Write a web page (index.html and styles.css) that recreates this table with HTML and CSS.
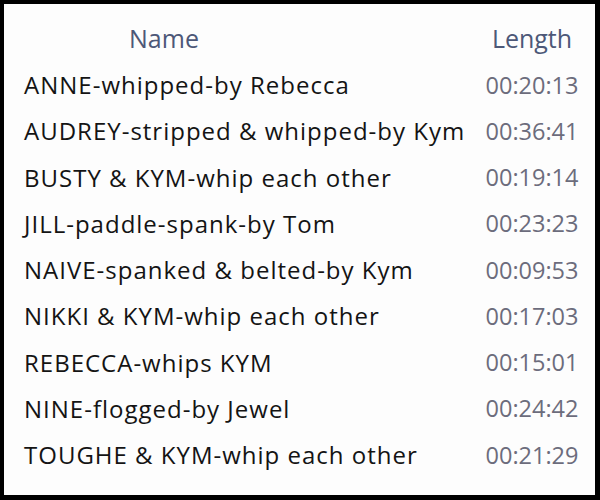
FILE: index.html
```html
<!DOCTYPE html>
<html>
<head>
<meta charset="utf-8">
<link rel="stylesheet" href="styles.css">
</head>
<body>
<div class="frame">
  <div class="header">
    <div class="h-name">Name</div>
    <div class="h-len">Length</div>
  </div>
  <div class="list">
    <div class="row"><span class="name">ANNE-whipped-by Rebecca</span><span class="len">00:20:13</span></div>
    <div class="row"><span class="name">AUDREY-stripped &amp; whipped-by Kym</span><span class="len">00:36:41</span></div>
    <div class="row"><span class="name">BUSTY &amp; KYM-whip each other</span><span class="len">00:19:14</span></div>
    <div class="row"><span class="name">JILL-paddle-spank-by Tom</span><span class="len">00:23:23</span></div>
    <div class="row"><span class="name">NAIVE-spanked &amp; belted-by Kym</span><span class="len">00:09:53</span></div>
    <div class="row"><span class="name">NIKKI &amp; KYM-whip each other</span><span class="len">00:17:03</span></div>
    <div class="row"><span class="name">REBECCA-whips KYM</span><span class="len">00:15:01</span></div>
    <div class="row"><span class="name">NINE-flogged-by Jewel</span><span class="len">00:24:42</span></div>
    <div class="row"><span class="name">TOUGHE &amp; KYM-whip each other</span><span class="len">00:21:29</span></div>
  </div>
</div>
</body>
</html>
```
FILE: styles.css
```css
html, body {
  margin: 0;
  padding: 0;
  background: #000;
}
.frame {
  box-sizing: border-box;
  width: 600px;
  height: 500px;
  border-top: 4px solid #000;
  border-left: 4px solid #000;
  border-right: 5px solid #000;
  border-bottom: 5px solid #000;
  background: #fdfdfd;
  font-family: "Open Sans", "Noto Sans", sans-serif;
}
.header {
  display: flex;
  align-items: flex-start;
  box-sizing: border-box;
  height: 57.6px;
  padding-top: 17px;
}
.h-name,
.h-len {
  font-size: 25px;
  line-height: normal;
  color: #4d5878;
  text-align: center;
}
.h-name {
  width: 320px;
}
.h-len {
  margin-left: auto;
  width: 110px;
  margin-right: 8px;
}
.list {
  display: flex;
  flex-direction: column;
}
.row {
  display: flex;
  align-items: center;
  height: 46.25px;
  padding-left: 20px;
}
.name {
  font-size: 24px;
  letter-spacing: 1px;
  color: #141414;
  white-space: nowrap;
}
.len {
  margin-left: auto;
  width: 110px;
  margin-right: 8px;
  text-align: center;
  font-size: 23.5px;
  color: #6c6c7c;
}
```
